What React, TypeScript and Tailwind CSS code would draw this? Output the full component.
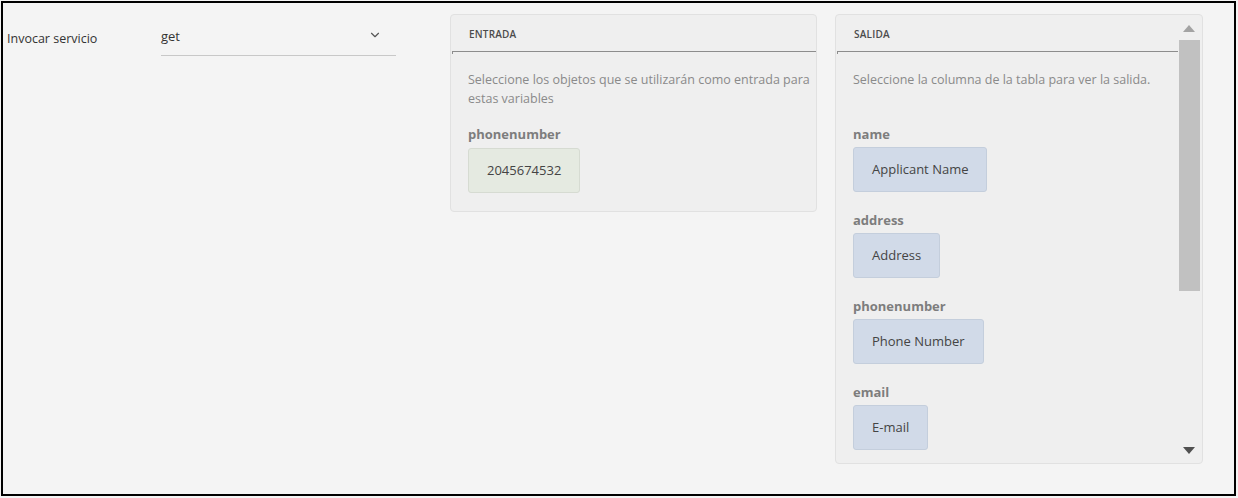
import { ChevronDown } from 'lucide-react'

const OUTPUTS = [
    { name: 'name', value: 'Applicant Name' },
    { name: 'address', value: 'Address' },
    { name: 'phonenumber', value: 'Phone Number' },
    { name: 'email', value: 'E-mail' }
]

const PanelHeader = ({ title }: { title: string }) => (
    <div className="h-[39px] flex flex-col">
        <div className="flex-1 flex items-center pl-[18px] pt-[2px] text-[10px] font-semibold text-[#4b4b4b] tracking-[0.2px]">
            {title}
        </div>
        <div className="ml-[1px] border-t border-[#8d8d8d]" />
        <div className="ml-[1px] w-px h-[2px] bg-[#8d8d8d]" />
    </div>
)

export default function App() {
    return (
        <div
            className="w-[1238px] h-[498px] bg-[#f4f4f4] pt-px pl-px"
            style={{ fontFamily: '"Open Sans", "Noto Sans", sans-serif' }}
        >
            <div className="w-[1235px] h-[495px] border-2 border-black flex">
                {/* Left: service selector */}
                <div className="w-[447px] flex items-start">
                    <div className="w-[158px] pl-[4px] pt-[27px] text-[12.5px] text-[#333]">
                        Invocar servicio
                    </div>
                    <div className="mt-[22px] w-[235px] h-[31px] border-b border-[#c8c8c8] flex items-start justify-between">
                        <span className="mt-[2px] text-[13px] text-[#333]">get</span>
                        <ChevronDown className="mt-[3px] mr-[14px] w-[14px] h-[14px] text-[#555]" strokeWidth={2} />
                    </div>
                </div>

                {/* Entrada */}
                <div className="mt-[11px] w-[367px] h-[198px] bg-[#efefef] border border-[#e1e1e1] rounded-[4px] flex flex-col">
                    <PanelHeader title="ENTRADA" />
                    <div className="pl-[17px] pr-[6px] pt-[16px]">
                        <p className="text-[12.5px] leading-[19px] text-[#8a8a8a]">
                            Seleccione los objetos que se utilizarán como entrada para estas variables
                        </p>
                        <div className="mt-[17px] text-[13px] font-bold text-[#7d7d7d] leading-[18px]">phonenumber</div>
                        <div className="mt-[5px] inline-flex items-center h-[45px] px-[18px] bg-[#e5eae1] border border-[#d6dbd2] rounded-[3px] text-[13px] text-[#444]">
                            2045674532
                        </div>
                    </div>
                </div>

                {/* Salida */}
                <div className="ml-[18px] mt-[11px] w-[368px] h-[450px] bg-[#efefef] border border-[#e1e1e1] rounded-[4px] flex">
                    <div className="flex-1 flex flex-col">
                        <PanelHeader title="SALIDA" />
                        <div className="px-[17px] pt-[16px]">
                            <p className="text-[12.5px] leading-[19px] text-[#8a8a8a]">
                                Seleccione la columna de la tabla para ver la salida.
                            </p>
                            <div className="mt-[36px] flex flex-col gap-[19px]">
                                {OUTPUTS.map(o => (
                                    <div key={o.name} className="flex flex-col items-start">
                                        <div className="text-[13px] font-bold text-[#7d7d7d] leading-[18px]">{o.name}</div>
                                        <div className="mt-[4px] inline-flex items-center h-[45px] px-[18px] bg-[#d1dae8] border border-[#c4cedc] rounded-[3px] text-[13px] text-[#444]">
                                            {o.value}
                                        </div>
                                    </div>
                                ))}
                            </div>
                        </div>
                    </div>
                    {/* scrollbar */}
                    <div className="w-[22px] mr-[2px] flex flex-col items-center">
                        <svg className="mt-[10px]" width="12" height="7" viewBox="0 0 12 7">
                            <path d="M6 0 L12 7 L0 7 Z" fill="#a3a3a3" />
                        </svg>
                        <div className="mt-[8px] w-[21px] h-[251px] bg-[#c1c1c1]" />
                        <div className="flex-1" />
                        <svg className="mb-[9px]" width="12" height="7" viewBox="0 0 12 7">
                            <path d="M0 0 L12 0 L6 7 Z" fill="#505050" />
                        </svg>
                    </div>
                </div>
            </div>
        </div>
    )
}
